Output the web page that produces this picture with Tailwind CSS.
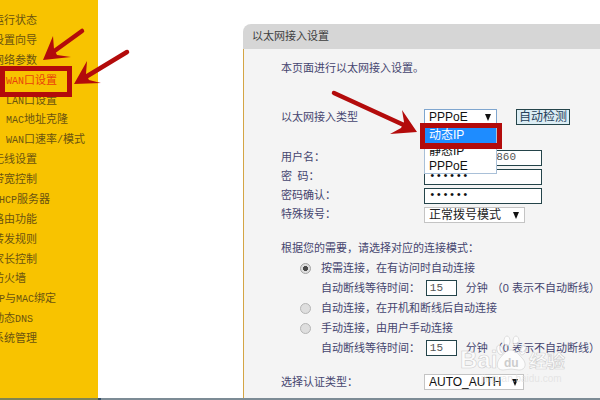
<!DOCTYPE html>
<html lang="zh-CN">
<head>
    <meta charset="UTF-8">
    <meta name="viewport" content="width=device-width, initial-scale=1.0">
    <title>以太网接入设置</title>
    <script src="https://cdn.jsdelivr.net/npm/@tailwindcss/browser@4"></script>
</head>
<body class="relative flex flex-col h-screen overflow-hidden bg-white text-[11px] leading-5 font-['Liberation_Sans','Noto_Sans_CJK_SC',sans-serif]">
    <div class="flex flex-1 min-h-0">
        <!-- sidebar -->
        <nav class="w-[98px] shrink-0 bg-[#f8c300] text-[#6b5310] overflow-hidden pt-3 pb-[52px]">
            <ul class="flex flex-col justify-between h-full whitespace-nowrap leading-4 -ml-[7px]">
                <li class="h-4"><a href="#">运行状态</a></li>
                <li class="h-4"><a href="#">设置向导</a></li>
                <li class="h-4"><a href="#">网络参数</a></li>
                <li class="h-4 pl-[13px]"><a href="#" class="text-[#e8420c]"><span class="text-[10px] leading-none font-['Liberation_Mono',monospace]">WAN</span>口设置</a></li>
                <li class="h-4 pl-[13px]"><a href="#"><span class="text-[10px] leading-none font-['Liberation_Mono',monospace]">LAN</span>口设置</a></li>
                <li class="h-4 pl-[13px]"><a href="#"><span class="text-[10px] leading-none font-['Liberation_Mono',monospace]">MAC</span>地址克隆</a></li>
                <li class="h-4 pl-[13px]"><a href="#"><span class="text-[10px] leading-none font-['Liberation_Mono',monospace]">WAN</span>口速率<span class="text-[10px] leading-none font-['Liberation_Mono',monospace]">/</span>模式</a></li>
                <li class="h-4"><a href="#">无线设置</a></li>
                <li class="h-4"><a href="#">带宽控制</a></li>
                <li class="h-4"><a href="#"><span class="text-[10px] leading-none font-['Liberation_Mono',monospace]">DHCP</span>服务器</a></li>
                <li class="h-4"><a href="#">路由功能</a></li>
                <li class="h-4"><a href="#">转发规则</a></li>
                <li class="h-4"><a href="#">家长控制</a></li>
                <li class="h-4"><a href="#">防火墙</a></li>
                <li class="h-4"><a href="#"><span class="text-[10px] leading-none font-['Liberation_Mono',monospace]">IP</span>与<span class="text-[10px] leading-none font-['Liberation_Mono',monospace]">MAC</span>绑定</a></li>
                <li class="h-4"><a href="#">动态<span class="text-[10px] leading-none font-['Liberation_Mono',monospace]">DNS</span></a></li>
                <li class="h-4"><a href="#">系统管理</a></li>
            </ul>
        </nav>

        <!-- settings panel -->
        <main class="flex flex-col flex-1 min-w-0 pt-6 pl-[145px]">
            <h1 class="bg-[#d6d6d6] text-[#3d3d3d] rounded-tl-lg h-[25px] leading-[25px] pl-[9px] shrink-0">以太网接入设置</h1>
            <form class="flex-1 bg-[#f4f4f4] border-l border-l-[#d4a545] text-[#45456f] pt-[9px] pl-[37px] whitespace-nowrap">
                <p>本页面进行以太网接入设置。</p>

                <div class="flex items-center h-5 mt-[29px]">
                    <label for="wan-type" class="w-[143px]">以太网接入类型</label>
                    <div class="relative">
                        <select id="wan-type" class="block appearance-none w-[73px] h-4 pl-1 text-xs leading-[14px] text-[#111] bg-white border border-[#7fa6cf]">
                            <option>PPPoE</option>
                            <option>动态IP</option>
                            <option>静态IP</option>
                        </select>
                        <svg class="absolute right-[6px] top-[5px] w-[6px] h-[7px]" viewBox="0 0 6 7"><path d="M0 0h6L3 7z" fill="#111"/></svg>
                        <ul class="absolute z-10 left-0 top-4 w-[73px] pt-[2px] bg-white border-x border-b border-[#a9c0d8] text-xs leading-4 text-[#111]">
                            <li class="pl-1 bg-[#1e8cff] text-white">动态IP</li>
                            <li class="pl-1">静态IP</li>
                            <li class="pl-1 leading-[14px]">PPPoE</li>
                        </ul>
                    </div>
                    <button type="button" class="ml-[19px] w-[54px] h-4 text-xs leading-3 text-[#24405a] bg-[#dcedf4] border border-[#24444a]">自动检测</button>
                </div>

                <div class="mt-[21px] leading-[19px]">
                    <div class="flex items-center h-[19px]">
                        <label for="user" class="w-[143px]">用户名：</label>
                        <input id="user" type="text" value="860" class="w-[118px] h-4 pr-[25px] text-right text-[11px] text-[#555] bg-white border border-[#24444a] font-['Liberation_Mono',monospace]">
                    </div>
                    <div class="flex items-center h-[19px]">
                        <label for="pwd" class="w-[143px]">密&ensp;码：</label>
                        <input id="pwd" type="text" value="••••••" class="w-[118px] h-4 pl-1 text-[11px] text-[#111] bg-white border border-[#24444a] font-['Liberation_Mono',monospace]">
                    </div>
                    <div class="flex items-center h-[19px]">
                        <label for="pwd2" class="w-[143px]">密码确认：</label>
                        <input id="pwd2" type="text" value="••••••" class="w-[118px] h-4 pl-1 text-[11px] text-[#111] bg-white border border-[#24444a] font-['Liberation_Mono',monospace]">
                    </div>
                    <div class="flex items-center h-[19px]">
                        <label for="dial" class="w-[143px]">特殊拨号：</label>
                        <div class="relative">
                            <select id="dial" class="block appearance-none w-[101px] h-4 pl-1 text-xs leading-[14px] text-[#222] bg-white border border-[#c4c4c4]">
                                <option>正常拨号模式</option>
                            </select>
                            <svg class="absolute right-[6px] top-[5px] w-[6px] h-[7px]" viewBox="0 0 6 7"><path d="M0 0h6L3 7z" fill="#111"/></svg>
                        </div>
                    </div>
                </div>

                <p class="mt-[14px]">根据您的需要，请选择对应的连接模式：</p>

                <div class="pl-[19px]">
                    <div class="flex items-center h-5 gap-[10px]">
                        <input id="mode-demand" type="radio" name="mode" checked class="appearance-none size-[11px] rounded-full border border-[#a3a3a3] bg-[#dedede] bg-radial from-[#4a4a4a] from-35% to-[#dedede] to-40%">
                        <label for="mode-demand">按需连接，在有访问时自动连接</label>
                    </div>
                    <div class="flex items-center h-5 pl-[21px]">
                        <label for="wait1" class="w-[105px]">自动断线等待时间：</label>
                        <input id="wait1" type="text" value="15" class="w-[31px] h-4 pl-[3px] text-[11px] text-[#555] bg-white border border-[#24444a] font-['Liberation_Mono',monospace]">
                        <span class="ml-[9px]">分钟</span>
                        <span class="ml-1">（0 表示不自动断线）</span>
                    </div>
                    <div class="flex items-center h-5 gap-[10px]">
                        <input id="mode-auto" type="radio" name="mode" class="appearance-none size-[11px] rounded-full border border-[#b5b5b5] bg-[#dedede]">
                        <label for="mode-auto">自动连接，在开机和断线后自动连接</label>
                    </div>
                    <div class="flex items-center h-5 gap-[10px]">
                        <input id="mode-manual" type="radio" name="mode" class="appearance-none size-[11px] rounded-full border border-[#b5b5b5] bg-[#dedede]">
                        <label for="mode-manual">手动连接，由用户手动连接</label>
                    </div>
                    <div class="flex items-center h-5 pl-[21px]">
                        <label for="wait2" class="w-[105px]">自动断线等待时间：</label>
                        <input id="wait2" type="text" value="15" class="w-[31px] h-4 pl-[3px] text-[11px] text-[#555] bg-white border border-[#24444a] font-['Liberation_Mono',monospace]">
                        <span class="ml-[9px]">分钟</span>
                        <span class="ml-1">（0 表示不自动断线）</span>
                    </div>
                </div>

                <div class="flex items-center h-5 mt-[14px]">
                    <label for="auth" class="w-[143px]">选择认证类型：</label>
                    <div class="relative">
                        <select id="auth" class="block appearance-none w-[100px] h-4 pl-1 text-xs leading-[14px] text-[#111] bg-white border border-[#c4c4c4]">
                            <option>AUTO_AUTH</option>
                        </select>
                        <svg class="absolute right-[6px] top-[5px] w-[6px] h-[7px]" viewBox="0 0 6 7"><path d="M0 0h6L3 7z" fill="#111"/></svg>
                    </div>
                </div>
            </form>
        </main>
    </div>
    <footer class="h-[2px] shrink-0 flex">
        <div class="w-[98px] bg-[#7f8455]"></div>
        <div class="w-[3px] bg-[#34506b]"></div>
        <div class="flex-1 bg-[#7c8b95]"></div>
    </footer>

    <!-- highlight boxes, arrows and watermark -->
    <svg class="absolute z-20 left-0 top-0 w-[600px] h-[400px] pointer-events-none" viewBox="0 0 600 400">
        <path fill="#b30b0b" fill-rule="evenodd" d="M0 66h72v31H0zM5 71v21h62V71z"/>
        <path fill="#b30b0b" fill-rule="evenodd" d="M420 123h82v26h-82zM425 128v15h72v-15z"/>
        <g stroke="#b30b0b" stroke-width="4.500" stroke-linecap="round">
            <path d="M82 31 53 52"/>
            <path d="M127 52 84 78"/>
            <path d="M334 93 406 126"/>
        </g>
        <g fill="#b30b0b">
            <path d="M43 60 53 36 54 49 57 55 71 57z"/>
            <path d="M74 84 87 61 86 74 89 80 101 83z"/>
            <path d="M417 132 402 110 404 122 401 128 390 134z"/>
        </g>
        <g fill="#fff" fill-opacity=".7" stroke="#bbb" stroke-opacity=".7" stroke-width=".6" font-family="Liberation Sans, Noto Sans CJK SC, sans-serif">
            <text x="460" y="368" font-size="24" font-weight="bold">Bai</text>
            <path d="M511 350c5 0 7 4 11 8 5 5 4 12-3 12-3 0-5-1-8-1s-5 1-8 1c-7 0-7-7-3-12 4-4 6-8 11-8z"/>
            <ellipse cx="500" cy="350" rx="3" ry="5" transform="rotate(-20 500 350)"/>
            <ellipse cx="507" cy="341" rx="3" ry="5"/>
            <ellipse cx="516" cy="341" rx="3" ry="5"/>
            <ellipse cx="523" cy="350" rx="3" ry="5" transform="rotate(20 523 350)"/>
            <text x="529" y="368" font-size="18" font-weight="bold">经验</text>
            <text x="481" y="382" font-size="10" stroke="none" fill="#ddd">jingyan.baidu.com</text>
        </g>
        <text x="504" y="367" font-size="12" font-weight="bold" fill="#ccc" font-family="Liberation Sans, sans-serif">du</text>
    </svg>
</body>
</html>
